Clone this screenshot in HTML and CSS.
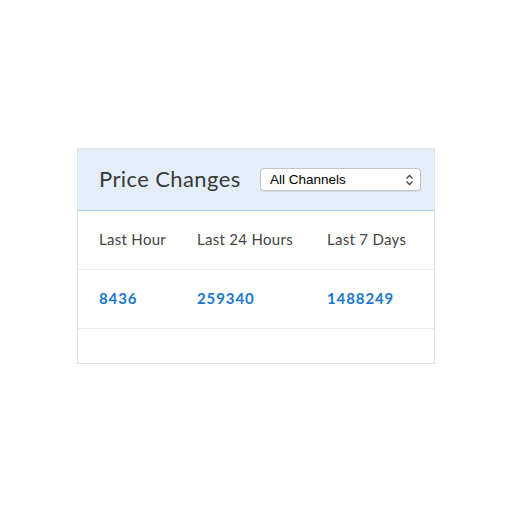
FILE: index.html
```html
<!DOCTYPE html>
<html>
<head>
<meta charset="utf-8">
<link rel="stylesheet" href="styles.css">
</head>
<body>
<div class="card">
  <div class="card-head">
    <h2 class="title">Price Changes</h2>
    <div class="select">
      <span class="select-text">All Channels</span>
      <svg class="select-arrows" width="9" height="12" viewBox="0 0 9 12"><path d="M1.5 4.5 L4.5 1.5 L7.5 4.5 M1.5 7.5 L4.5 10.5 L7.5 7.5" fill="none" stroke="#444" stroke-width="1.4"/></svg>
    </div>
  </div>
  <div class="row labels">
    <div class="cell c1">Last Hour</div>
    <div class="cell c2">Last 24 Hours</div>
    <div class="cell c3">Last 7 Days</div>
  </div>
  <div class="row values">
    <div class="cell c1">8436</div>
    <div class="cell c2">259340</div>
    <div class="cell c3">1488249</div>
  </div>
  <div class="row empty"></div>
</div>
</body>
</html>
```
FILE: styles.css
```css
html, body { margin: 0; padding: 0; background: #fff; }
body { font-family: Lato, "Open Sans", sans-serif; }
.card {
  margin: 148px 0 0 77px;
  width: 356px;
  border: 1px solid #e2e2e2;
  background: #fff;
}
.card-head {
  height: 62px;
  background: #e3eef8;
  border-bottom: 1px solid #a9cdee;
  display: flex;
  align-items: center;
  padding: 0 13px 0 21px;
  box-sizing: border-box;
}
.title {
  margin: 0;
  font-size: 22px;
  font-weight: 400;
  color: #3a3a3a;
  flex: 1;
  letter-spacing: 0.4px;
  position: relative;
  top: -1px;
}
.select {
  width: 161px;
  height: 23px;
  box-sizing: border-box;
  border: 1px solid #c4c4c4;
  border-radius: 4px;
  background: #fff;
  box-shadow: 0 1px 1px rgba(0,0,0,0.08);
  display: flex;
  align-items: center;
  padding: 0 6px 0 9px;
}
.select-text {
  flex: 1;
  font-family: "Liberation Sans", Arial, sans-serif;
  font-size: 13.5px;
  color: #000;
}
.select-arrows { display: block; }
.row {
  display: grid;
  grid-template-columns: 98px 130px 1fr;
  padding: 0 0 3px 21px;
  box-sizing: border-box;
  border-bottom: 1px solid #ebebeb;
  align-items: center;
}
.labels { height: 59px; font-size: 15px; color: #444; letter-spacing: 0.3px; }
.values { height: 59px; font-size: 15px; font-weight: 700; color: #1a78cc; letter-spacing: 0.9px; }
.empty { height: 34px; border-bottom: 0; }
```
